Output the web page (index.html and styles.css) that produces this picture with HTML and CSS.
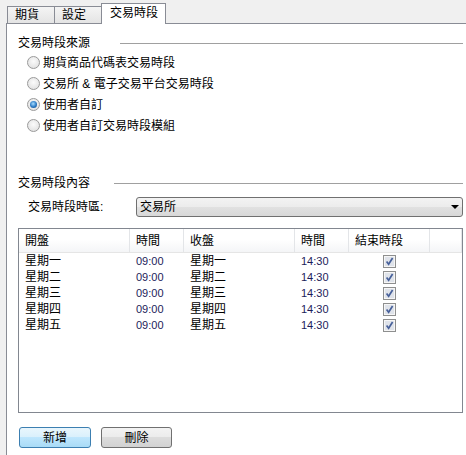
FILE: index.html
```html
<!DOCTYPE html>
<html lang="zh-Hant">

<head>
    <meta charset="UTF-8" />
    <title>交易時段</title>
    <link rel="stylesheet" href="styles.css">
</head>

<body>
    <div class="tabs">
        <div class="tab">期貨</div>
        <div class="tab">設定</div>
        <div class="tab active">交易時段</div>
    </div>

    <div class="panel">
        <div class="group-title source">
            <span>交易時段來源</span>
            <i class="rule"></i>
        </div>
        <ul class="options">
            <li><span class="radio"></span>期貨商品代碼表交易時段</li>
            <li><span class="radio"></span>交易所 &amp; 電子交易平台交易時段</li>
            <li><span class="radio on"></span>使用者自訂</li>
            <li><span class="radio"></span>使用者自訂交易時段模組</li>
        </ul>

        <div class="group-title content">
            <span>交易時段內容</span>
            <i class="rule"></i>
        </div>
        <div class="zone-row">
            <label>交易時段時區:</label>
            <div class="combo">交易所<span class="arrow"></span></div>
        </div>

        <div class="list">
            <div class="row head">
                <div>開盤</div>
                <div>時間</div>
                <div>收盤</div>
                <div>時間</div>
                <div>結束時段</div>
                <div></div>
            </div>
            <div class="row">
                <div>星期一</div><div class="num">09:00</div><div>星期一</div><div class="num">14:30</div>
                <div class="check"><svg width="13" height="13" viewBox="0 0 13 13"><rect x="0.5" y="0.5" width="12" height="12" fill="#f6f6f6" stroke="#8e8f8f"/><rect x="2" y="2" width="9" height="9" fill="#dfe3ea"/><path d="M3.6 6.6 L5.6 9.2 L9.6 3" fill="none" stroke="#47609a" stroke-width="1.7"/></svg></div><div></div>
            </div>
            <div class="row">
                <div>星期二</div><div class="num">09:00</div><div>星期二</div><div class="num">14:30</div>
                <div class="check"><svg width="13" height="13" viewBox="0 0 13 13"><rect x="0.5" y="0.5" width="12" height="12" fill="#f6f6f6" stroke="#8e8f8f"/><rect x="2" y="2" width="9" height="9" fill="#dfe3ea"/><path d="M3.6 6.6 L5.6 9.2 L9.6 3" fill="none" stroke="#47609a" stroke-width="1.7"/></svg></div><div></div>
            </div>
            <div class="row">
                <div>星期三</div><div class="num">09:00</div><div>星期三</div><div class="num">14:30</div>
                <div class="check"><svg width="13" height="13" viewBox="0 0 13 13"><rect x="0.5" y="0.5" width="12" height="12" fill="#f6f6f6" stroke="#8e8f8f"/><rect x="2" y="2" width="9" height="9" fill="#dfe3ea"/><path d="M3.6 6.6 L5.6 9.2 L9.6 3" fill="none" stroke="#47609a" stroke-width="1.7"/></svg></div><div></div>
            </div>
            <div class="row">
                <div>星期四</div><div class="num">09:00</div><div>星期四</div><div class="num">14:30</div>
                <div class="check"><svg width="13" height="13" viewBox="0 0 13 13"><rect x="0.5" y="0.5" width="12" height="12" fill="#f6f6f6" stroke="#8e8f8f"/><rect x="2" y="2" width="9" height="9" fill="#dfe3ea"/><path d="M3.6 6.6 L5.6 9.2 L9.6 3" fill="none" stroke="#47609a" stroke-width="1.7"/></svg></div><div></div>
            </div>
            <div class="row">
                <div>星期五</div><div class="num">09:00</div><div>星期五</div><div class="num">14:30</div>
                <div class="check"><svg width="13" height="13" viewBox="0 0 13 13"><rect x="0.5" y="0.5" width="12" height="12" fill="#f6f6f6" stroke="#8e8f8f"/><rect x="2" y="2" width="9" height="9" fill="#dfe3ea"/><path d="M3.6 6.6 L5.6 9.2 L9.6 3" fill="none" stroke="#47609a" stroke-width="1.7"/></svg></div><div></div>
            </div>
        </div>

        <div class="buttons">
            <button class="btn primary">新增</button>
            <button class="btn">刪除</button>
        </div>
    </div>
</body>

</html>
```

FILE: styles.css
```css
:root {
    --frame-color: #898c95;
    --rule-color: #a0a0a0;
    --window-bg: #f0f0f0;
}

* {
    box-sizing: border-box;
}

body {
    margin: 0;
    height: 455px;
    overflow: hidden;
    background: var(--window-bg);
    font-family: 'Liberation Sans', 'Noto Sans CJK TC', sans-serif;
    font-size: 12px;
    line-height: 16px;
    color: #000;
}

/* tab strip */
.tabs {
    display: flex;
    align-items: flex-end;
    height: 23px;
    padding-left: 7px;
}

.tab {
    width: 48px;
    height: 17px;
    padding-left: 7px;
    border: 1px solid var(--frame-color);
    border-bottom: 0;
    background: linear-gradient(#f4f4f4, #e4e4e4);
    line-height: 16px;
}

.tab + .tab {
    margin-left: -1px;
}

.tab.active {
    width: 65px;
    height: 21px;
    padding-left: 8px;
    margin-bottom: -1px;
    background: #fff;
    line-height: 19px;
    position: relative;
    z-index: 1;
}

/* page body */
.panel {
    height: 432px;
    margin-left: 6px;
    padding: 11px 3px 0 11px;
    border-left: 1px solid var(--frame-color);
    border-top: 1px solid var(--frame-color);
    background: #fff;
}

.group-title {
    display: flex;
    align-items: center;
    height: 16px;
}

.group-title .rule {
    flex: 1;
    margin-left: 24px;
    border-top: 1px solid var(--rule-color);
}

.group-title.source .rule {
    margin-left: 30px;
}

.group-title.content {
    margin-top: 39px;
}

.options {
    list-style: none;
    margin: 1px 0 0;
    padding: 0;
}

.options li {
    display: flex;
    align-items: center;
    height: 21px;
    padding-left: 9px;
}

.radio {
    width: 13px;
    height: 13px;
    margin-right: 3px;
    border: 1px solid #9a9a9a;
    border-radius: 50%;
    background: radial-gradient(circle at 50% 40%, #fbfbfb, #dcdcdc);
    display: flex;
    align-items: center;
    justify-content: center;
}

.radio.on::after {
    content: '';
    width: 7px;
    height: 7px;
    border-radius: 50%;
    background: radial-gradient(circle at 45% 40%, #a6dcff, #2a79c4 55%, #16457a);
}

/* time zone selector */
.zone-row {
    display: flex;
    align-items: center;
    margin-top: 6px;
}

.zone-row label {
    width: 118px;
    padding-left: 10px;
}

.combo {
    flex: 1;
    display: flex;
    align-items: center;
    height: 20px;
    padding-left: 3px;
    border: 1px solid #707070;
    border-radius: 3px;
    background: linear-gradient(#f3f3f3, #ececec 50%, #e1e1e1 50%, #d8d8d8);
}

.arrow {
    margin-left: auto;
    margin-right: 3px;
    border-left: 4px solid transparent;
    border-right: 4px solid transparent;
    border-top: 4px solid #000;
}

/* list view */
.list {
    height: 185px;
    margin-top: 11px;
    border: 1px solid #828790;
    background: #fff;
}

.row {
    display: grid;
    grid-template-columns: 111px 54px 111px 54px 81px 1fr;
    align-items: center;
    height: 16px;
}

.row > div {
    padding-left: 6px;
    white-space: nowrap;
}

.row.head {
    height: 24px;
    align-items: stretch;
    border-bottom: 1px solid #e5e5e5;
    background: linear-gradient(#fff 45%, #f4f5f7);
}

.row.head > div {
    display: flex;
    align-items: center;
    padding-top: 1px;
    border-right: 1px solid #e3e5e8;
}

.num {
    font-size: 11px;
    color: #1c1c5a;
}

.row > .check {
    display: flex;
    justify-content: center;
    padding-left: 0;
}

.check svg {
    display: block;
}

/* buttons */
.buttons {
    display: flex;
    gap: 10px;
    margin-top: 14px;
    padding-left: 1px;
}

.btn {
    width: 71px;
    height: 21px;
    padding: 0;
    border: 1px solid #707070;
    border-radius: 3px;
    font: inherit;
    color: #000;
    background: linear-gradient(#f3f3f3, #ebebeb 50%, #dcdcdc 50%, #d2d2d2);
}

.btn.primary {
    width: 72px;
    border-color: #3c7fb1;
    background: linear-gradient(#e9f6fd, #d9f0fc 50%, #bee6fd 50%, #a9dbf6);
}
```
